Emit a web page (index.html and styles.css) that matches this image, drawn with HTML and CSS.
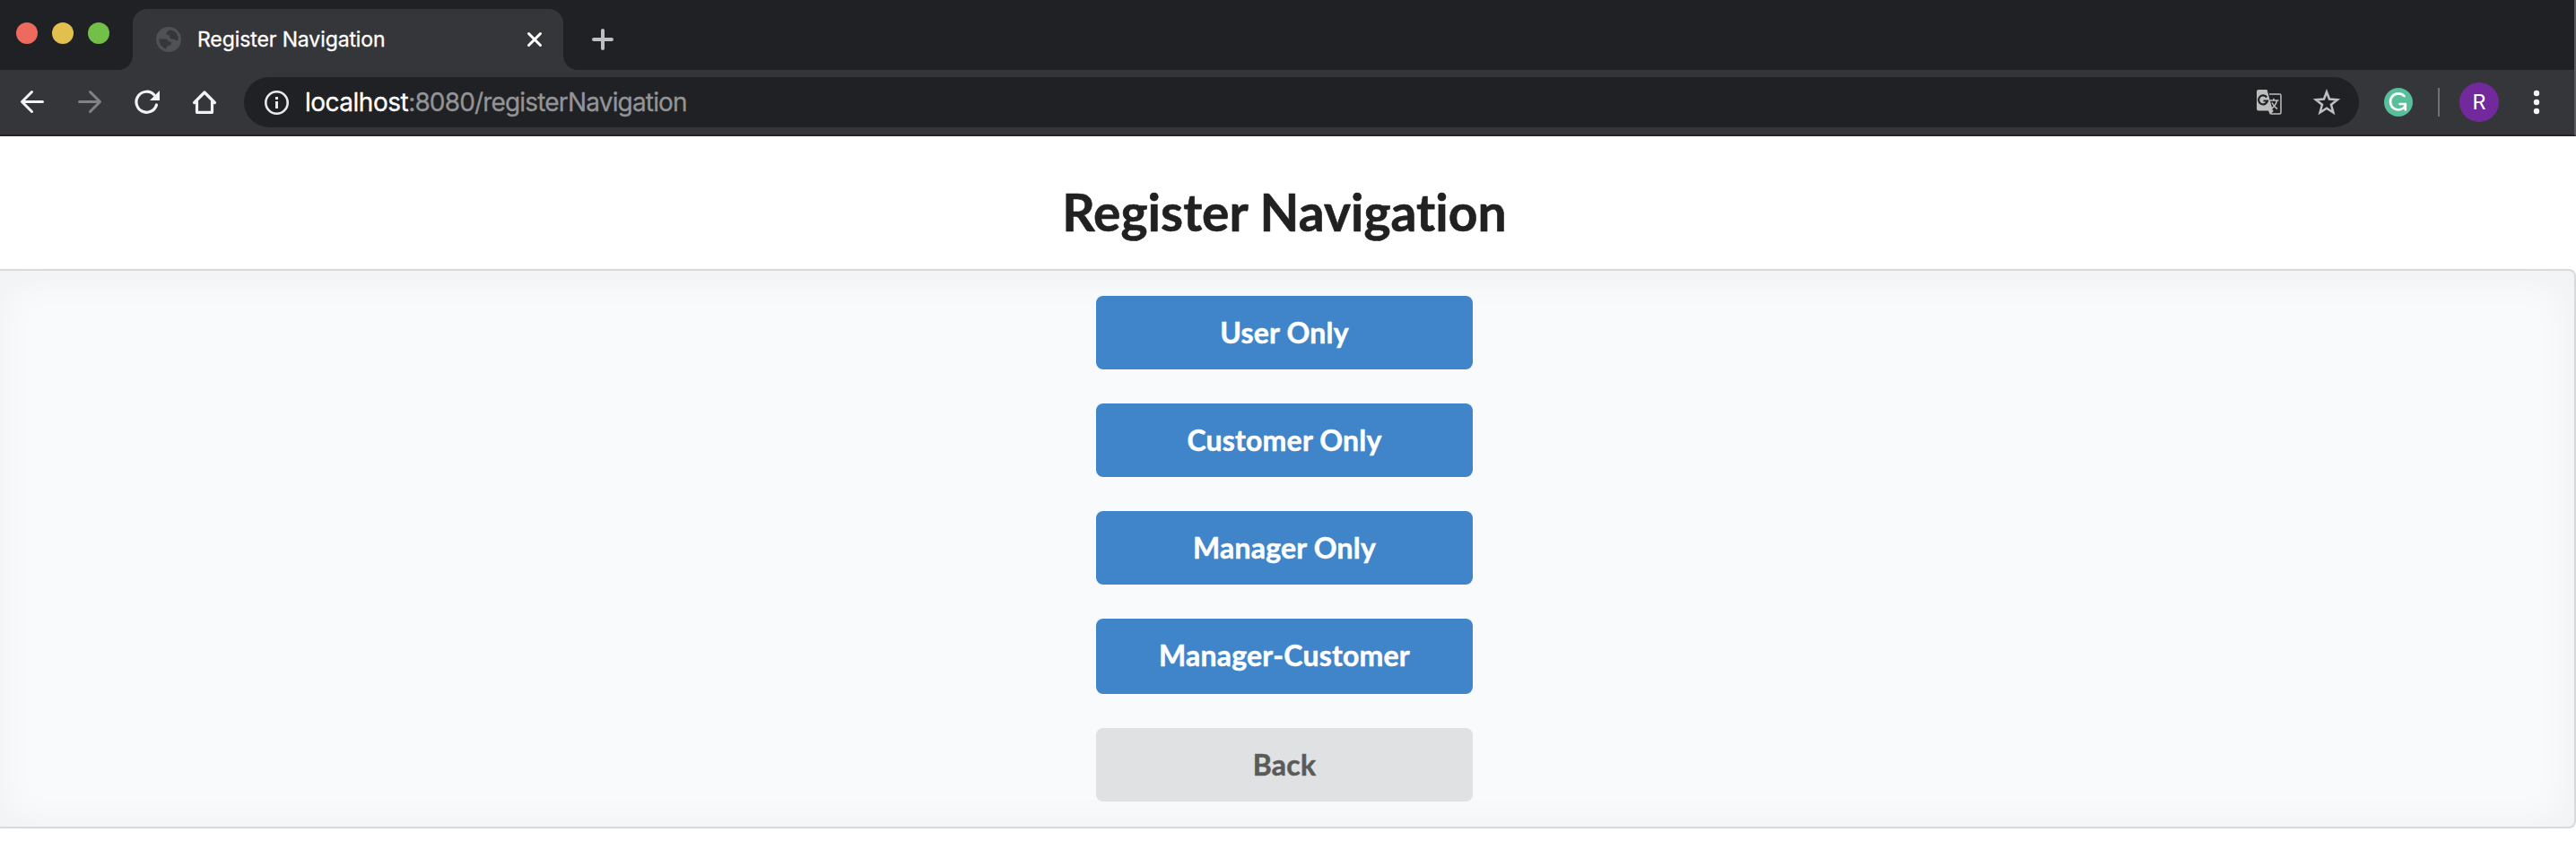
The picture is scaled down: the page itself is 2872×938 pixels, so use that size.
FILE: index.html
```html
<!DOCTYPE html>
<html lang="en">
<head>
<meta charset="utf-8">
<title>Register Navigation</title>
<link rel="stylesheet" href="styles.css">
</head>
<body>
<div class="browser">
  <div class="tabstrip">
    <div class="lights"><span class="light red"></span><span class="light yellow"></span><span class="light green"></span></div>
    <div class="tab">
      <svg class="globe" width="28" height="28" viewBox="0 0 28 28"><circle cx="14" cy="14" r="14" fill="#505155"/><path d="M16.500 3.200Q12 4.500 11.500 7q0 2.300 3.500 2.300-.5 3.700 2.500 4.200l3 .5q2 1.500 4.300.5A11 11 0 0 0 16.500 3.200zM3.300 13.500h7q3.200 0 3.200 3h3q1.500 3.500-2 4.200-3 .5-3 4A11 11 0 0 1 3.300 13.500z" fill="#35363a"/></svg>
      <span class="tab-title">Register Navigation</span>
      <svg class="close" width="20" height="20" viewBox="0 0 20 20"><path d="M3.500 3.500l13 13M16.500 3.500l-13 13" stroke="#fff" stroke-width="3" stroke-linecap="round"/></svg>
    </div>
    <svg class="plus" width="24" height="24" viewBox="0 0 24 24"><path d="M12 2v20M2 12h20" stroke="#bdc1c6" stroke-width="4" stroke-linecap="round"/></svg>
  </div>
  <div class="toolbar">
    <div class="nav">
      <svg width="32" height="32" viewBox="0 0 32 32" fill="none" stroke="#f1f3f4" stroke-width="3" stroke-linecap="round" stroke-linejoin="round"><path d="M27.500 15.500H5M15.500 4.500L4.500 15.500l11 11"/></svg>
      <svg width="32" height="32" viewBox="0 0 32 32" fill="none" stroke="#818285" stroke-width="3" stroke-linecap="round" stroke-linejoin="round"><path d="M4.500 15.500H27M16.500 4.500l11 11-11 11"/></svg>
      <svg width="32" height="32" viewBox="0 0 32 32"><path d="M26.500 19A11.500 11.500 0 1 1 24 8" fill="none" stroke="#f1f3f4" stroke-width="3.200" stroke-linecap="round"/><path d="M30 3v11H19z" fill="#f1f3f4"/></svg>
      <svg width="32" height="32" viewBox="0 0 32 32" fill="none" stroke="#f1f3f4" stroke-width="3.200" stroke-linecap="round" stroke-linejoin="round"><path d="M4.600 16.500L16 5l11.400 11.500M7.500 15v12.300h17V15"/></svg>
    </div>
    <div class="omnibox">
      <svg width="28" height="28" viewBox="0 0 28 28"><circle cx="14.500" cy="14.500" r="12.200" fill="none" stroke="#e8eaed" stroke-width="2.600"/><path d="M13 13h3v8h-3zM13 8h3v3h-3z" fill="#e8eaed"/></svg>
      <span class="url"><span class="host">localhost</span>:8080/registerNavigation</span>
      <svg class="translate" width="28" height="28" viewBox="0 0 28 28"><path d="M14 5h11.500q1.500 0 1.500 1.500v19q0 1.500-1.500 1.500H16" fill="none" stroke="#bdbdbd" stroke-width="1.500"/><path d="M2 0h9.500l6.500 23.500h1L15 28l-2-4.500H2q-2 0-2-2V2Q0 0 2 0z" fill="#bdbdbd"/><path d="M11.200 8.500A5 5 0 1 0 12 12.500H7.500" fill="none" stroke="#202124" stroke-width="2.200"/><path d="M15 12h9.500M19 9.800V12M22.500 12c-.5 4-3 7-6 9M17 14.500c1.500 3 3.500 5.500 6 7" fill="none" stroke="#bdbdbd" stroke-width="1.600"/></svg>
      <svg class="star" width="32" height="32" viewBox="0 0 32 32"><path d="M16 4.500l3 8 9 .7-7 5.600 2.400 8.700L16 22.700l-7.400 4.800L11 18.800l-7-5.600 9-.7z" fill="none" stroke="#bdc1c6" stroke-width="2.500"/></svg>
    </div>
    <svg class="grammarly" width="32" height="32" viewBox="0 0 32 32"><circle cx="16" cy="16" r="16" fill="#58bf9b"/><path d="M22.500 9.200A9 9 0 1 0 24 19.500M17.500 18h6.300v6.500" fill="none" stroke="#fff" stroke-width="2.600" stroke-linecap="round"/></svg>
    <span class="divider"></span>
    <span class="avatar">R</span>
    <svg class="menu" width="8" height="28" viewBox="0 0 8 28"><g fill="#f1f3f4"><circle cx="4" cy="4" r="3.200"/><circle cx="4" cy="14" r="3.200"/><circle cx="4" cy="24" r="3.200"/></g></svg>
  </div>
</div>
<main class="page">
  <h1 class="heading">Register Navigation</h1>
  <section class="segment">
    <button class="button">User Only</button>
    <button class="button">Customer Only</button>
    <button class="button">Manager Only</button>
    <button class="button tall">Manager-Customer</button>
    <button class="button back">Back</button>
  </section>
</main>
</body>
</html>
```
FILE: styles.css
```css
* { box-sizing: border-box; }
html { height: 938px; overflow: hidden; }
body { margin: 0; height: 938px; overflow: hidden; background: #fff; font-family: Lato, sans-serif; }
svg { display: block; flex: none; }
.browser { height: 152px; background: #35363a; border-right: 2px solid #5a5b5f; border-bottom: 2px solid #252223; font-family: Inter, sans-serif; }
.tabstrip { display: flex; height: 78px; padding-left: 18px; background: #202124; }
.lights { display: flex; gap: 16px; width: 130px; padding-top: 25px; }
.light { width: 24px; height: 24px; border-radius: 50%; }
.red { background: #ee6a5f; }
.yellow { background: #e1c04e; }
.green { background: #73c048; }
.tab { position: relative; display: flex; align-items: center; width: 480px; height: 68px; margin-top: 10px; padding: 0 22px 0 26px; border-radius: 16px 16px 0 0; background: #35363a; }
.tab::before, .tab::after { content: ""; position: absolute; bottom: 0; width: 16px; height: 16px; }
.tab::before { right: 100%; background: radial-gradient(circle at 0 0, #202124 15.5px, #35363a 16.5px); }
.tab::after { left: 100%; background: radial-gradient(circle at 100% 0, #202124 15.5px, #35363a 16.5px); }
.tab-title { margin-left: 18px; color: #fff; font-size: 23px; letter-spacing: -0.1px; line-height: 30px; white-space: nowrap; -webkit-text-stroke: .3px; }
.close { margin-left: auto; }
.plus { margin: 32px 0 0 32px; }
.toolbar { display: flex; align-items: center; height: 72px; padding-left: 20px; }
.nav { display: flex; gap: 32px; width: 252px; }
.omnibox { display: flex; align-items: center; width: 2358px; height: 56px; padding: 0 20px 0 22px; border-radius: 28px; background: #202124; }
.url { margin-left: 18px; color: #939497; font-size: 28px; letter-spacing: -0.83px; line-height: 36px; white-space: nowrap; -webkit-text-stroke: .3px; }
.host { color: #fff; letter-spacing: -0.5px; }
.translate { margin-left: auto; }
.star { margin-left: 34px; }
.grammarly { margin-left: 28px; }
.divider { width: 2px; height: 32px; margin-left: 28px; background: #707175; }
.avatar { width: 44px; height: 44px; margin-left: 22px; border-radius: 50%; background: #71299b; color: #fff; font: 24px/44px Roboto, sans-serif; text-align: center; }
.menu { margin-left: 38px; }
.page { display: flex; flex-direction: column; }
.heading { width: 2864px; height: 148px; margin: 0; padding-top: 48px; color: #212121; font-size: 57px; font-weight: 700; line-height: 72px; text-align: center; font-variant-ligatures: none; -webkit-text-stroke: .6px; }
.segment { display: flex; flex-direction: column; align-items: center; gap: 38px; height: 624px; margin-left: -8px; padding-top: 28px; border: 2px solid #d8d9db; border-radius: 8px; background: #f9fafc; box-shadow: inset 0 4px 50px rgba(34, 36, 38, .05); }
.button { width: 420px; height: 82px; padding: 0 0 1px; border: 0; border-radius: 8px; background: #4085ca; color: #fff; font: 700 32px/40px Lato, sans-serif; letter-spacing: .2px; text-align: center; -webkit-text-stroke: .5px; }
.tall { height: 84px; padding-bottom: 3px; }
.back { background: #e0e1e2; color: #5a5a5a; }
```
